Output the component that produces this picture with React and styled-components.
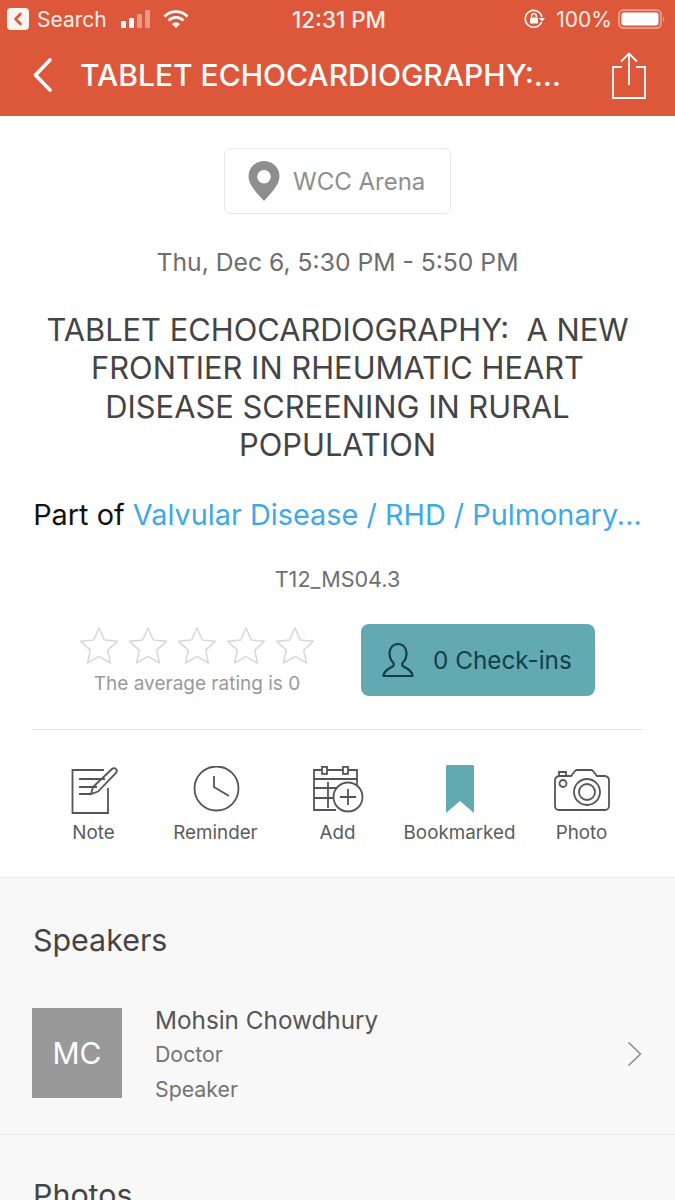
import React from 'react';
import styled, { createGlobalStyle } from 'styled-components';

const Global = createGlobalStyle`
  html, body { margin: 0; padding: 0; background: #fff; }
  body { width: 675px; height: 1200px; overflow: hidden; font-family: Inter, "Liberation Sans", sans-serif; }
  * { box-sizing: border-box; }
`;

const Page = styled.div`
  width: 675px;
  height: 1200px;
  overflow: hidden;
  display: flex;
  flex-direction: column;
`;

const Header = styled.header`
  height: 116px;
  background: #dd583b;
  color: #fff;
  display: flex;
  flex-direction: column;
  flex-shrink: 0;
`;

const StatusBar = styled.div`
  height: 38px;
  padding: 0 9px 0 7px;
  display: grid;
  grid-template-columns: 1fr auto 1fr;
  align-items: center;
  font-size: 21px;
  color: #fdeee9;
`;

const StatusLeft = styled.div`
  display: flex;
  align-items: center;
`;

const StatusRight = styled.div`
  display: flex;
  align-items: center;
  justify-content: flex-end;
`;

const BackBadge = styled.span`
  width: 22px;
  height: 22px;
  border-radius: 4px;
  background: #fdf3f0;
  display: flex;
  align-items: center;
  justify-content: center;
  margin-right: 8px;
`;

const Time = styled.span`
  font-weight: 500;
  font-size: 22.4px;
  margin-left: 5px;
`;

const NavBar = styled.div`
  flex: 1;
  display: flex;
  align-items: center;
  padding: 0 28px 4px 33px;
`;

const NavTitle = styled.div`
  flex: 1;
  margin-left: 27px;
  font-size: 30px;
  font-weight: 500;
  white-space: nowrap;
`;

const Top = styled.section`
  height: 762px;
  flex-shrink: 0;
  padding: 32px 32px 0;
  display: flex;
  flex-direction: column;
  align-items: center;
  border-bottom: 1px solid #ececec;
`;

const Location = styled.div`
  width: 227px;
  height: 66px;
  border: 1px solid #e7e7e7;
  border-radius: 7px;
  display: flex;
  align-items: center;
  padding-left: 23px;
  font-size: 24px;
  color: #8e8e8e;
  gap: 13px;
`;

const DateLine = styled.div`
  margin-top: 32px;
  font-size: 24.7px;
  line-height: 32px;
  color: #6d6d6d;
`;

const Title = styled.h1`
  margin: 33px 0 0;
  width: 100%;
  font-size: 30.85px;
  line-height: 38.3px;
  font-weight: 400;
  text-align: center;
  color: #444;
  white-space: pre-wrap;
`;

const PartOf = styled.div`
  margin-top: 32px;
  font-size: 28.85px;
  line-height: 38px;
  color: #111;
  white-space: nowrap;
`;

const TrackLink = styled.span`
  color: #3fa9e6;
`;

const Code = styled.div`
  margin-top: 32px;
  font-size: 21.6px;
  line-height: 26px;
  color: #6f6f6f;
`;

const RatingRow = styled.div`
  margin-top: 32px;
  width: 100%;
  display: flex;
  padding: 0 48px;
  justify-content: space-between;
`;

const Rating = styled.div`
  width: 234px;
  display: flex;
  flex-direction: column;
  align-items: center;
`;

const Stars = styled.div`
  display: flex;
  gap: 9px;
  height: 42px;
  align-items: center;
`;

const RatingText = styled.div`
  font-size: 19px;
  line-height: 24px;
  color: #999;
  margin-top: 6px;
`;

const CheckIn = styled.div`
  width: 234px;
  height: 72px;
  border-radius: 8px;
  background: #63a9b2;
  color: #123f47;
  display: flex;
  align-items: center;
  padding-left: 21px;
  gap: 19px;
  font-size: 24.3px;
`;

const Divider = styled.hr`
  width: 100%;
  margin: 33px 0 0;
  border: 0;
  border-top: 1px solid #e6e6e6;
`;

const Actions = styled.div`
  width: 100%;
  display: grid;
  grid-template-columns: repeat(5, 122px);
  justify-content: center;
  margin-top: 35px;
`;

const Action = styled.div`
  display: flex;
  flex-direction: column;
  align-items: center;
  font-size: 18.8px;
  color: #5b5b5b;
  white-space: nowrap;
`;

const IconBox = styled.div`
  height: 50px;
  display: flex;
  align-items: center;
  justify-content: center;
  margin-bottom: 6px;
`;

const Lower = styled.section`
  flex: 1;
  background: #f8f8f8;
  padding-top: 43px;
`;

const SectionTitle = styled.h2`
  margin: 0;
  padding-left: 33px;
  font-size: 30.4px;
  line-height: 38px;
  font-weight: 400;
  color: #444;
`;

const Speaker = styled.div`
  margin-top: 49px;
  padding: 0 33px 28px 32px;
  display: flex;
  align-items: flex-start;
  border-bottom: 1px solid #ececec;
`;

const Avatar = styled.div`
  width: 90px;
  height: 90px;
  background: #999;
  color: #fff;
  display: flex;
  align-items: center;
  justify-content: center;
  font-size: 30px;
  flex-shrink: 0;
`;

const SpeakerInfo = styled.div`
  flex: 1;
  margin-left: 33px;
  display: flex;
  flex-direction: column;
`;

const SpeakerName = styled.div`
  font-size: 24.3px;
  line-height: 24px;
  margin-bottom: 5px;
  color: #555;
`;

const SpeakerMeta = styled.div`
  font-size: 21.3px;
  line-height: 34.5px;
  color: #737373;
`;

const Chevron = styled.svg`
  margin-top: 33px;
  flex-shrink: 0;
`;

const NextSection = styled(SectionTitle)`
  margin-top: 41px;
`;

const StarIcon = () => (
  <svg width="40" height="38" viewBox="0 0 40 38" fill="none" stroke="#d9d9d9" strokeWidth="1.6" strokeLinejoin="round">
    <path d="M20 2l5.400 12 13 1.400-9.700 8.800 2.700 12.800L20 30.400 8.600 37l2.700-12.800-9.700-8.800 13-1.400z" />
  </svg>
);

export default function App() {
  return (
    <Page>
      <Global />
      <Header>
        <StatusBar>
          <StatusLeft>
            <BackBadge>
              <svg width="10" height="14" viewBox="0 0 10 14" fill="none" stroke="#dd583b" strokeWidth="2.6" strokeLinecap="round" strokeLinejoin="round">
                <path d="M7.500 2L2.500 7l5 5" />
              </svg>
            </BackBadge>
            Search
            <svg width="32" height="20" viewBox="0 0 32 20" style={{ marginLeft: 14 }}>
              <rect x="0" y="12" width="5" height="7" rx="1" fill="#fff" />
              <rect x="8" y="9" width="5" height="10" rx="1" fill="#fff" />
              <rect x="16" y="5" width="5" height="14" rx="1" fill="#fff" opacity=".4" />
              <rect x="24" y="1" width="5" height="18" rx="1" fill="#fff" opacity=".4" />
            </svg>
            <svg width="26" height="20" viewBox="0 0 26 20" fill="none" stroke="#fff" strokeWidth="2.6" style={{ marginLeft: 10 }}>
              <path d="M1.500 7.500a16 16 0 0 1 23 0" />
              <path d="M5.500 11.500a10.500 10.500 0 0 1 15 0" />
              <path d="M13 19l-4-4a5.600 5.600 0 0 1 8 0z" fill="#fff" stroke="none" />
            </svg>
          </StatusLeft>
          <Time>12:31 PM</Time>
          <StatusRight>
            <svg width="22" height="22" viewBox="0 0 22 22" fill="none" stroke="#fff" strokeWidth="1.6" style={{ marginRight: 11 }}>
              <path d="M18.500 14a8.400 8.400 0 1 1 .4-5" />
              <path d="M16 10h6l-3 3.400z" fill="#fff" stroke="none" />
              <rect x="7" y="9.500" width="8" height="6" rx="1" fill="#fff" stroke="none" />
              <path d="M8.700 9.500V8a2.300 2.300 0 0 1 4.600 0v1.500" strokeWidth="1.3" />
            </svg>
            100%
            <svg width="48" height="22" viewBox="0 0 48 22" style={{ marginLeft: 6 }}>
              <rect x="1" y="2" width="42" height="18" rx="4.500" fill="none" stroke="#fff" strokeOpacity=".5" strokeWidth="1.5" />
              <rect x="3.500" y="4.500" width="37" height="13" rx="2.500" fill="#fff" />
              <path d="M45 8.500a3 3 0 0 1 0 5z" fill="#fff" fillOpacity=".5" />
            </svg>
          </StatusRight>
        </StatusBar>
        <NavBar>
          <svg width="20" height="34" viewBox="0 0 20 34" fill="none" stroke="#fff" strokeWidth="3.6" strokeLinecap="round" strokeLinejoin="round">
            <path d="M17 2L2.500 17 17 32" />
          </svg>
          <NavTitle>TABLET ECHOCARDIOGRAPHY:...</NavTitle>
          <svg width="36" height="47" viewBox="0 0 36 47" fill="none" stroke="#fff" strokeWidth="1.8">
            <path d="M11 15H2v31h32V15H25" />
            <path d="M18 33V2M10 9.500L18 1.500l8 8" />
          </svg>
        </NavBar>
      </Header>

      <Top>
        <Location>
          <svg width="32" height="40" viewBox="0 0 32 40">
            <path fillRule="evenodd" fill="#8e8e8e" d="M16 0a15.500 15.500 0 0 1 15.500 15.500C31.500 25 20 35 16 40 12 35 .5 25 .5 15.500A15.500 15.500 0 0 1 16 0zm0 9a6.800 6.800 0 1 0 0 13.600A6.800 6.800 0 0 0 16 9z" />
          </svg>
          WCC Arena
        </Location>
        <DateLine>Thu, Dec 6, 5:30 PM - 5:50 PM</DateLine>
        <Title>{'TABLET ECHOCARDIOGRAPHY:  A NEW\nFRONTIER IN RHEUMATIC HEART\nDISEASE SCREENING IN RURAL\nPOPULATION'}</Title>
        <PartOf>Part of <TrackLink>Valvular Disease / RHD / Pulmonary...</TrackLink></PartOf>
        <Code>T12_MS04.3</Code>
        <RatingRow>
          <Rating>
            <Stars>
              <StarIcon /><StarIcon /><StarIcon /><StarIcon /><StarIcon />
            </Stars>
            <RatingText>The average rating is 0</RatingText>
          </Rating>
          <CheckIn>
            <svg width="32" height="36" viewBox="0 0 32 36" fill="none" stroke="#123f47" strokeWidth="2.2" strokeLinejoin="round">
              <path d="M16 2c-5 0-8.500 3.800-8.500 9.500 0 4 1.700 7.200 3.800 9.300 .8 .8 .7 2.700-.5 3.500C7 26.800 2 28 1.500 34h29c-.5-6-5.500-7.200-9.300-9.700-1.200-.8-1.300-2.700-.5-3.500 2.100-2.100 3.800-5.300 3.800-9.300C24.500 5.800 21 2 16 2z" />
            </svg>
            0 Check-ins
          </CheckIn>
        </RatingRow>
        <Divider />
        <Actions>
          <Action>
            <IconBox>
              <svg width="50" height="48" viewBox="0 0 50 48" fill="none" stroke="#555" strokeWidth="1.8">
                <path d="M35 4H3.500v43H39V22" />
                <path d="M10 13h26M10 21h18M10 28h12" />
                <path d="M22 28l2-7L43 3c1.300-1.200 3-1.200 4 0s1 2.600 0 3.800L29 25.500z" />
              </svg>
            </IconBox>
            Note
          </Action>
          <Action>
            <IconBox>
              <svg width="48" height="48" viewBox="0 0 48 48" fill="none" stroke="#555" strokeWidth="1.8">
                <circle cx="24.500" cy="22.500" r="22" />
                <path d="M22 10v11l15 9" />
              </svg>
            </IconBox>
            Reminder
          </Action>
          <Action>
            <IconBox>
              <svg width="52" height="48" viewBox="0 0 52 48" fill="none" stroke="#555" strokeWidth="1.8">
                <path d="M24 44H2V4h43v16" />
                <path d="M2 13h43" />
                <rect x="10" y="0.900" width="5" height="7" fill="#fff" />
                <rect x="31" y="0.900" width="5" height="7" fill="#fff" />
                <path d="M2 22h26M2 32h22M16 16v26" />
                <circle cx="36" cy="31" r="14.500" fill="#fff" />
                <path d="M36 23v16M28 31h16" />
              </svg>
            </IconBox>
            Add
          </Action>
          <Action>
            <IconBox>
              <svg width="28" height="50" viewBox="0 0 28 50">
                <path fill="#63a9b2" d="M1 0h26a1 1 0 0 1 1 1v47l-14-12L0 48V1a1 1 0 0 1 1-1z" />
              </svg>
            </IconBox>
            Bookmarked
          </Action>
          <Action>
            <IconBox>
              <svg width="56" height="44" viewBox="0 0 56 44" fill="none" stroke="#555" strokeWidth="1.8">
                <path d="M5 8h12l4-5c.5-.7 1.200-1 2-1h14c.8 0 1.500 .3 2 1l4 5h8c2 0 4 2 4 4v26c0 2.500-2 4-4 4H5c-2.500 0-4-1.500-4-4V12c0-2 2-4 4-4z" />
                <path d="M5 8V4h7v4" />
                <circle cx="9" cy="15.500" r="3.500" />
                <circle cx="33" cy="24" r="13" />
                <circle cx="33" cy="24" r="8" />
              </svg>
            </IconBox>
            Photo
          </Action>
        </Actions>
      </Top>

      <Lower>
        <SectionTitle>Speakers</SectionTitle>
        <Speaker>
          <Avatar>MC</Avatar>
          <SpeakerInfo>
            <SpeakerName>Mohsin Chowdhury</SpeakerName>
            <SpeakerMeta>Doctor</SpeakerMeta>
            <SpeakerMeta>Speaker</SpeakerMeta>
          </SpeakerInfo>
          <Chevron width="15" height="26" viewBox="0 0 15 26" fill="none" stroke="#888" strokeWidth="1.5">
            <path d="M1.500 1.500L13.500 13 1.500 24.500" />
          </Chevron>
        </Speaker>
        <NextSection>Photos</NextSection>
      </Lower>
    </Page>
  );
}
